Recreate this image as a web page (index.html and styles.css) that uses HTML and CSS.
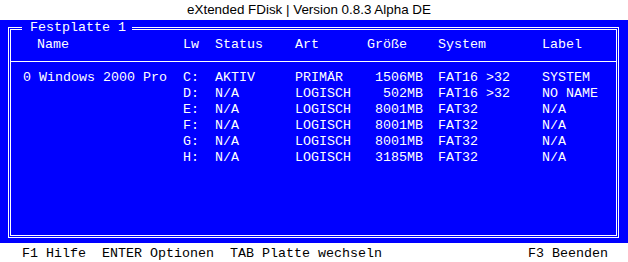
FILE: index.html
```html
<!DOCTYPE html>
<html lang="de">
<head>
  <meta charset="UTF-8">
  <title>eXtended FDisk</title>
  <link rel="stylesheet" href="styles.css">
</head>
<body>
  <div class="titlebar">eXtended FDisk | Version 0.8.3 Alpha DE</div>

  <div class="screen">
    <fieldset class="disk">
      <legend>Festplatte 1</legend>

      <div class="row head">
        <span class="name">Name</span>
        <span>Lw</span>
        <span>Status</span>
        <span>Art</span>
        <span>Größe</span>
        <span>System</span>
        <span>Label</span>
      </div>

      <div class="rows">
        <div class="row">
          <span>0 Windows 2000 Pro</span>
          <span>C:</span>
          <span>AKTIV</span>
          <span>PRIMÄR</span>
          <span class="size">1506MB</span>
          <span>FAT16 &gt;32</span>
          <span>SYSTEM</span>
        </div>
        <div class="row">
          <span></span>
          <span>D:</span>
          <span>N/A</span>
          <span>LOGISCH</span>
          <span class="size">502MB</span>
          <span>FAT16 &gt;32</span>
          <span>NO NAME</span>
        </div>
        <div class="row">
          <span></span>
          <span>E:</span>
          <span>N/A</span>
          <span>LOGISCH</span>
          <span class="size">8001MB</span>
          <span>FAT32</span>
          <span>N/A</span>
        </div>
        <div class="row">
          <span></span>
          <span>F:</span>
          <span>N/A</span>
          <span>LOGISCH</span>
          <span class="size">8001MB</span>
          <span>FAT32</span>
          <span>N/A</span>
        </div>
        <div class="row">
          <span></span>
          <span>G:</span>
          <span>N/A</span>
          <span>LOGISCH</span>
          <span class="size">8001MB</span>
          <span>FAT32</span>
          <span>N/A</span>
        </div>
        <div class="row">
          <span></span>
          <span>H:</span>
          <span>N/A</span>
          <span>LOGISCH</span>
          <span class="size">3185MB</span>
          <span>FAT32</span>
          <span>N/A</span>
        </div>
      </div>
    </fieldset>
  </div>

  <div class="keys">
    <span>F1 Hilfe  ENTER Optionen  TAB Platte wechseln</span>
    <span>F3 Beenden</span>
  </div>
</body>
</html>
```

FILE: styles.css
```css
html, body {
  margin: 0;
  padding: 0;
}
body {
  width: 628px;
  height: 262px;
  overflow: hidden;
  background-color: #fff;
  font-family: "Liberation Mono", "DejaVu Sans Mono", monospace;
  font-size: 13.33px;
  line-height: 16px;
}
.titlebar {
  height: 20px;
  line-height: 20px;
  text-align: center;
  padding-right: 10px;
  font-family: "Liberation Sans", Arial, sans-serif;
  font-size: 13.4px;
  color: #000;
}
.screen {
  height: 223px;
  box-sizing: border-box;
  background-color: #0000ff;
  color: #fff;
  padding: 0 9px 5px 8px;
  display: flex;
  flex-direction: column;
}
.disk {
  flex: 1;
  min-width: 0;
  margin: 0;
  padding: 0;
  border: 3px double #fff;
}
.disk legend {
  margin-left: 11px;
  padding: 0 6px 0 8px;
  white-space: pre;
}
.row {
  display: grid;
  grid-template-columns: 160px 32px 80px 72px 71px 104px 1fr;
  padding-left: 12px;
  white-space: pre;
}
.head {
  padding-top: 1px;
  padding-bottom: 8px;
  border-bottom: 1px solid #fff;
}
.head .name {
  padding-left: 14px;
}
.rows {
  padding-top: 8px;
}
.size {
  text-align: right;
  padding-right: 15px;
}
.keys {
  display: flex;
  justify-content: space-between;
  padding: 3px 20px 0 22px;
  color: #000;
  white-space: pre;
}
```
